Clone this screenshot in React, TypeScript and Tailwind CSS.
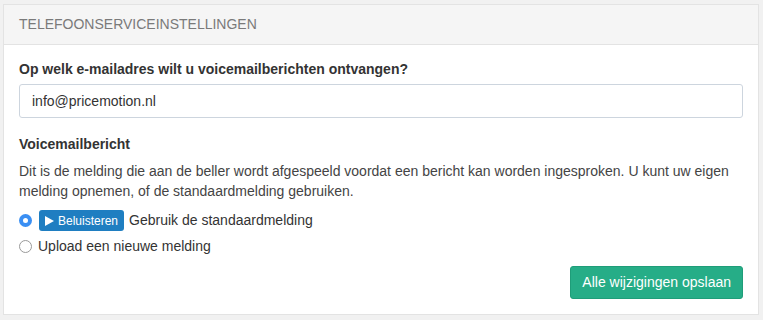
export default function App() {
  return (
    <div className="min-h-[320px] w-[763px] bg-[#f1f1f1] pl-[3px] pt-[4px] font-['Liberation_Sans',Arial,sans-serif] text-[14px] text-[#333]">
      <div className="w-[756px] border border-[#e3e3e3] bg-white">
        <div className="flex h-[40px] items-center border-b border-[#e3e3e3] bg-[#f5f5f5] px-[15px] text-[14px] uppercase text-[#7a7a7a]">
          Telefoonserviceinstellingen
        </div>
        <div className="px-[15px] pb-[15px] pt-[14px]">
          <label className="block text-[14px] font-bold leading-[20px]">
            Op welk e-mailadres wilt u voicemailberichten ontvangen?
          </label>
          <input
            readOnly
            value="info@pricemotion.nl"
            className="mt-[5px] block h-[34px] w-full rounded-[3px] border border-[#cdd5de] px-[12px] text-[14px] text-[#333] outline-none"
          />
          <div className="mt-[16px] text-[14px] font-bold leading-[20px]">Voicemailbericht</div>
          <p className="mt-[8px] leading-[19.5px] text-[#444]">
            Dit is de melding die aan de beller wordt afgespeeld voordat een bericht kan worden ingesproken. U kunt uw eigen
            melding opnemen, of de standaardmelding gebruiken.
          </p>
          <div className="mt-[9px] flex items-center">
            <span className="flex h-[13px] w-[13px] items-center justify-center rounded-full bg-[#3a8ff3]">
              <span className="h-[5px] w-[5px] rounded-full bg-white" />
            </span>
            <button className="ml-[7px] flex h-[21px] items-center gap-[4px] rounded-[3px] bg-[#1f7ec1] px-[6px] text-[12px] text-white">
              <svg width="9" height="10" viewBox="0 0 9 10">
                <path d="M0 0 L9 5 L0 10 Z" fill="white" />
              </svg>
              Beluisteren
            </button>
            <span className="ml-[5px]">Gebruik de standaardmelding</span>
          </div>
          <div className="mt-[5px] flex items-center">
            <span className="h-[13px] w-[13px] rounded-full border border-[#9a9a9a] bg-white" />
            <span className="ml-[6px]">Upload een nieuwe melding</span>
          </div>
          <div className="mt-[9px] flex justify-end">
            <button className="h-[33px] rounded-[3px] border border-[#1f9d79] bg-[#26ad87] px-[11px] text-[14px] text-white">
              Alle wijzigingen opslaan
            </button>
          </div>
        </div>
      </div>
    </div>
  )
}
